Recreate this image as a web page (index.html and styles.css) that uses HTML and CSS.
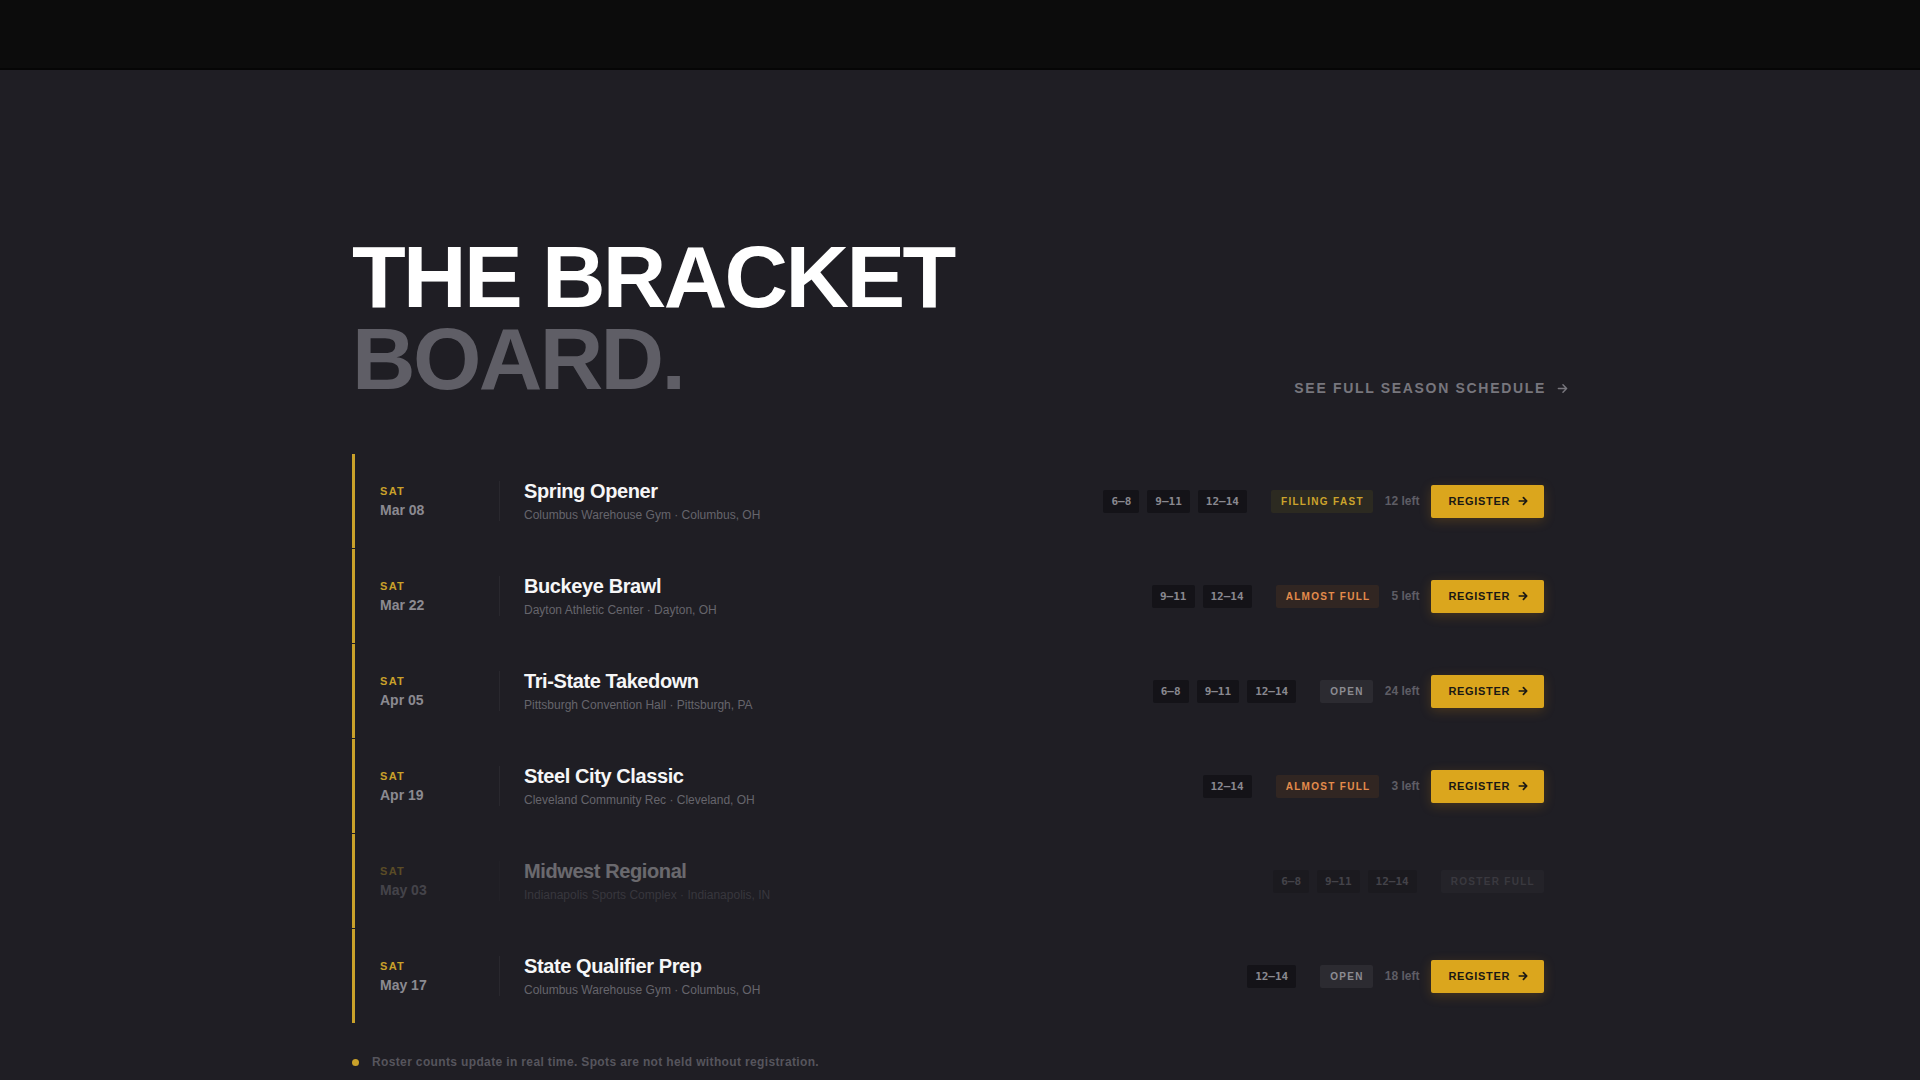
FILE: index.html
```html
<!DOCTYPE html>
<html lang="en">
<head>
    <meta charset="UTF-8">
    <meta name="viewport" content="width=device-width, initial-scale=1.0">
    <title>The Bracket Board</title>
    <link rel="stylesheet" href="styles.css">
</head>
<body>
    <header class="topbar"></header>

    <main class="board">
        <div class="board-head">
            <h1 class="board-title">THE BRACKET<br><span class="muted">BOARD.</span></h1>
            <a class="season-link" href="#">
                SEE FULL SEASON SCHEDULE
                <svg width="11" height="11" viewBox="0 0 12 12" fill="none" stroke="currentColor" stroke-width="1.6" stroke-linecap="round" stroke-linejoin="round"><path d="M1.5 6h9M6.5 2l4 4-4 4"/></svg>
            </a>
        </div>

        <ul class="event-list">
            <li class="event">
                <div class="event-date">
                    <div class="day">SAT</div>
                    <div class="date">Mar 08</div>
                </div>
                <div class="divider"></div>
                <div class="event-info">
                    <div class="event-name">Spring Opener</div>
                    <div class="event-place">Columbus Warehouse Gym · Columbus, OH</div>
                </div>
                <div class="event-meta">
                    <div class="tags">
                        <span class="tag">6–8</span>
                        <span class="tag">9–11</span>
                        <span class="tag">12–14</span>
                    </div>
                    <span class="status filling">FILLING FAST</span>
                    <span class="spots">12 left</span>
                    <button class="register-btn">REGISTER
                        <svg width="10" height="10" viewBox="0 0 12 12" fill="none" stroke="currentColor" stroke-width="2" stroke-linecap="round" stroke-linejoin="round"><path d="M1.5 6h9M6.5 2l4 4-4 4"/></svg>
                    </button>
                </div>
            </li>

            <li class="event">
                <div class="event-date">
                    <div class="day">SAT</div>
                    <div class="date">Mar 22</div>
                </div>
                <div class="divider"></div>
                <div class="event-info">
                    <div class="event-name">Buckeye Brawl</div>
                    <div class="event-place">Dayton Athletic Center · Dayton, OH</div>
                </div>
                <div class="event-meta">
                    <div class="tags">
                        <span class="tag">9–11</span>
                        <span class="tag">12–14</span>
                    </div>
                    <span class="status almost">ALMOST FULL</span>
                    <span class="spots">5 left</span>
                    <button class="register-btn">REGISTER
                        <svg width="10" height="10" viewBox="0 0 12 12" fill="none" stroke="currentColor" stroke-width="2" stroke-linecap="round" stroke-linejoin="round"><path d="M1.5 6h9M6.5 2l4 4-4 4"/></svg>
                    </button>
                </div>
            </li>

            <li class="event">
                <div class="event-date">
                    <div class="day">SAT</div>
                    <div class="date">Apr 05</div>
                </div>
                <div class="divider"></div>
                <div class="event-info">
                    <div class="event-name">Tri-State Takedown</div>
                    <div class="event-place">Pittsburgh Convention Hall · Pittsburgh, PA</div>
                </div>
                <div class="event-meta">
                    <div class="tags">
                        <span class="tag">6–8</span>
                        <span class="tag">9–11</span>
                        <span class="tag">12–14</span>
                    </div>
                    <span class="status open">OPEN</span>
                    <span class="spots">24 left</span>
                    <button class="register-btn">REGISTER
                        <svg width="10" height="10" viewBox="0 0 12 12" fill="none" stroke="currentColor" stroke-width="2" stroke-linecap="round" stroke-linejoin="round"><path d="M1.5 6h9M6.5 2l4 4-4 4"/></svg>
                    </button>
                </div>
            </li>

            <li class="event">
                <div class="event-date">
                    <div class="day">SAT</div>
                    <div class="date">Apr 19</div>
                </div>
                <div class="divider"></div>
                <div class="event-info">
                    <div class="event-name">Steel City Classic</div>
                    <div class="event-place">Cleveland Community Rec · Cleveland, OH</div>
                </div>
                <div class="event-meta">
                    <div class="tags">
                        <span class="tag">12–14</span>
                    </div>
                    <span class="status almost">ALMOST FULL</span>
                    <span class="spots">3 left</span>
                    <button class="register-btn">REGISTER
                        <svg width="10" height="10" viewBox="0 0 12 12" fill="none" stroke="currentColor" stroke-width="2" stroke-linecap="round" stroke-linejoin="round"><path d="M1.5 6h9M6.5 2l4 4-4 4"/></svg>
                    </button>
                </div>
            </li>

            <li class="event is-full">
                <div class="event-date">
                    <div class="day">SAT</div>
                    <div class="date">May 03</div>
                </div>
                <div class="divider"></div>
                <div class="event-info">
                    <div class="event-name">Midwest Regional</div>
                    <div class="event-place">Indianapolis Sports Complex · Indianapolis, IN</div>
                </div>
                <div class="event-meta">
                    <div class="tags">
                        <span class="tag">6–8</span>
                        <span class="tag">9–11</span>
                        <span class="tag">12–14</span>
                    </div>
                    <span class="status full">ROSTER FULL</span>
                </div>
            </li>

            <li class="event">
                <div class="event-date">
                    <div class="day">SAT</div>
                    <div class="date">May 17</div>
                </div>
                <div class="divider"></div>
                <div class="event-info">
                    <div class="event-name">State Qualifier Prep</div>
                    <div class="event-place">Columbus Warehouse Gym · Columbus, OH</div>
                </div>
                <div class="event-meta">
                    <div class="tags">
                        <span class="tag">12–14</span>
                    </div>
                    <span class="status open">OPEN</span>
                    <span class="spots">18 left</span>
                    <button class="register-btn">REGISTER
                        <svg width="10" height="10" viewBox="0 0 12 12" fill="none" stroke="currentColor" stroke-width="2" stroke-linecap="round" stroke-linejoin="round"><path d="M1.5 6h9M6.5 2l4 4-4 4"/></svg>
                    </button>
                </div>
            </li>
        </ul>

        <p class="board-note"><span class="dot"></span>Roster counts update in real time. Spots are not held without registration.</p>
    </main>
</body>
</html>
```

FILE: styles.css
```css
* {
    margin: 0;
    padding: 0;
    box-sizing: border-box;
}

body {
    font-family: 'Liberation Sans', Arial, sans-serif;
    background: #1f1e24;
    color: #f4f4f5;
    min-height: 100vh;
}

.topbar {
    height: 70px;
    background: #0c0c0c;
    border-bottom: 2px solid #060606;
}

.board {
    max-width: 1216px;
    margin: 0 auto;
    padding-top: 166px;
}

.board-head {
    display: flex;
    justify-content: space-between;
    align-items: flex-end;
}

.board-title {
    font-size: 88px;
    line-height: 82px;
    font-weight: 700;
    letter-spacing: -0.03em;
    color: #ffffff;
}

.board-title .muted {
    color: #5f5e66;
}

.season-link {
    display: flex;
    align-items: center;
    gap: 11px;
    font-size: 14px;
    font-weight: 700;
    letter-spacing: 0.12em;
    color: #77767d;
    text-decoration: none;
    margin-bottom: 4px;
}

/* rows sit 1px apart so the gold edge shows a small break between them */
.event-list {
    list-style: none;
    margin-top: 54px;
    display: flex;
    flex-direction: column;
    gap: 1px;
}

.event {
    display: flex;
    align-items: center;
    padding: 25px 24px 25px 25px;
    border-left: 3px solid #c9a12a;
}

.event.is-full > * {
    opacity: 0.35;
}

.event-date {
    flex: 0 0 119px;
}

.day {
    font-size: 11px;
    line-height: 14px;
    font-weight: 700;
    letter-spacing: 0.12em;
    color: #c9a12a;
}

.date {
    font-size: 14px;
    line-height: 18px;
    font-weight: 700;
    color: #8b8a91;
    margin-top: 3px;
}

.divider {
    width: 1px;
    height: 40px;
    background: #29282e;
}

.event-info {
    margin-left: 24px;
}

.event-name {
    font-size: 20px;
    line-height: 24px;
    font-weight: 700;
    letter-spacing: -0.02em;
    color: #f6f6f7;
}

.event-place {
    font-size: 12px;
    line-height: 16px;
    color: #66656c;
    margin-top: 4px;
}

.event-meta {
    margin-left: auto;
    display: flex;
    align-items: center;
    gap: 12px;
}

.tags {
    display: flex;
    gap: 8px;
    margin-right: 12px;
}

.tag {
    font-family: 'DejaVu Sans Mono', 'Liberation Mono', monospace;
    font-size: 11px;
    font-weight: 700;
    line-height: 23px;
    padding: 0 8px;
    color: #8a8990;
    background: #141318;
    border-radius: 2px;
}

.status {
    font-size: 10px;
    font-weight: 700;
    line-height: 23px;
    letter-spacing: 0.13em;
    padding: 0 9px 0 10px;
    border-radius: 2px;
}

.status.filling {
    color: #cda42c;
    background: #2c2a21;
}

.status.almost {
    color: #e48c4c;
    background: #312622;
}

.status.open {
    color: #8d8c93;
    background: #2c2b31;
}

.status.full {
    color: #6c6b72;
    background: #2e2d33;
}

.spots {
    font-size: 12px;
    font-weight: 700;
    color: #5e5d65;
}

.register-btn {
    display: flex;
    align-items: center;
    gap: 8px;
    height: 33px;
    padding: 0 16px 0 17px;
    font-family: inherit;
    font-size: 11px;
    font-weight: 700;
    letter-spacing: 0.06em;
    color: #1a1814;
    background: #dba61d;
    border: none;
    border-radius: 2px;
    box-shadow: 0 3px 12px rgba(219, 140, 20, 0.22);
    cursor: pointer;
}

.board-note {
    display: flex;
    align-items: center;
    gap: 13px;
    margin-top: 30px;
    font-size: 12px;
    line-height: 18px;
    font-weight: 700;
    letter-spacing: 0.03em;
    color: #56555d;
}

.dot {
    width: 7px;
    height: 7px;
    border-radius: 50%;
    background: #c9a12a;
}
```
